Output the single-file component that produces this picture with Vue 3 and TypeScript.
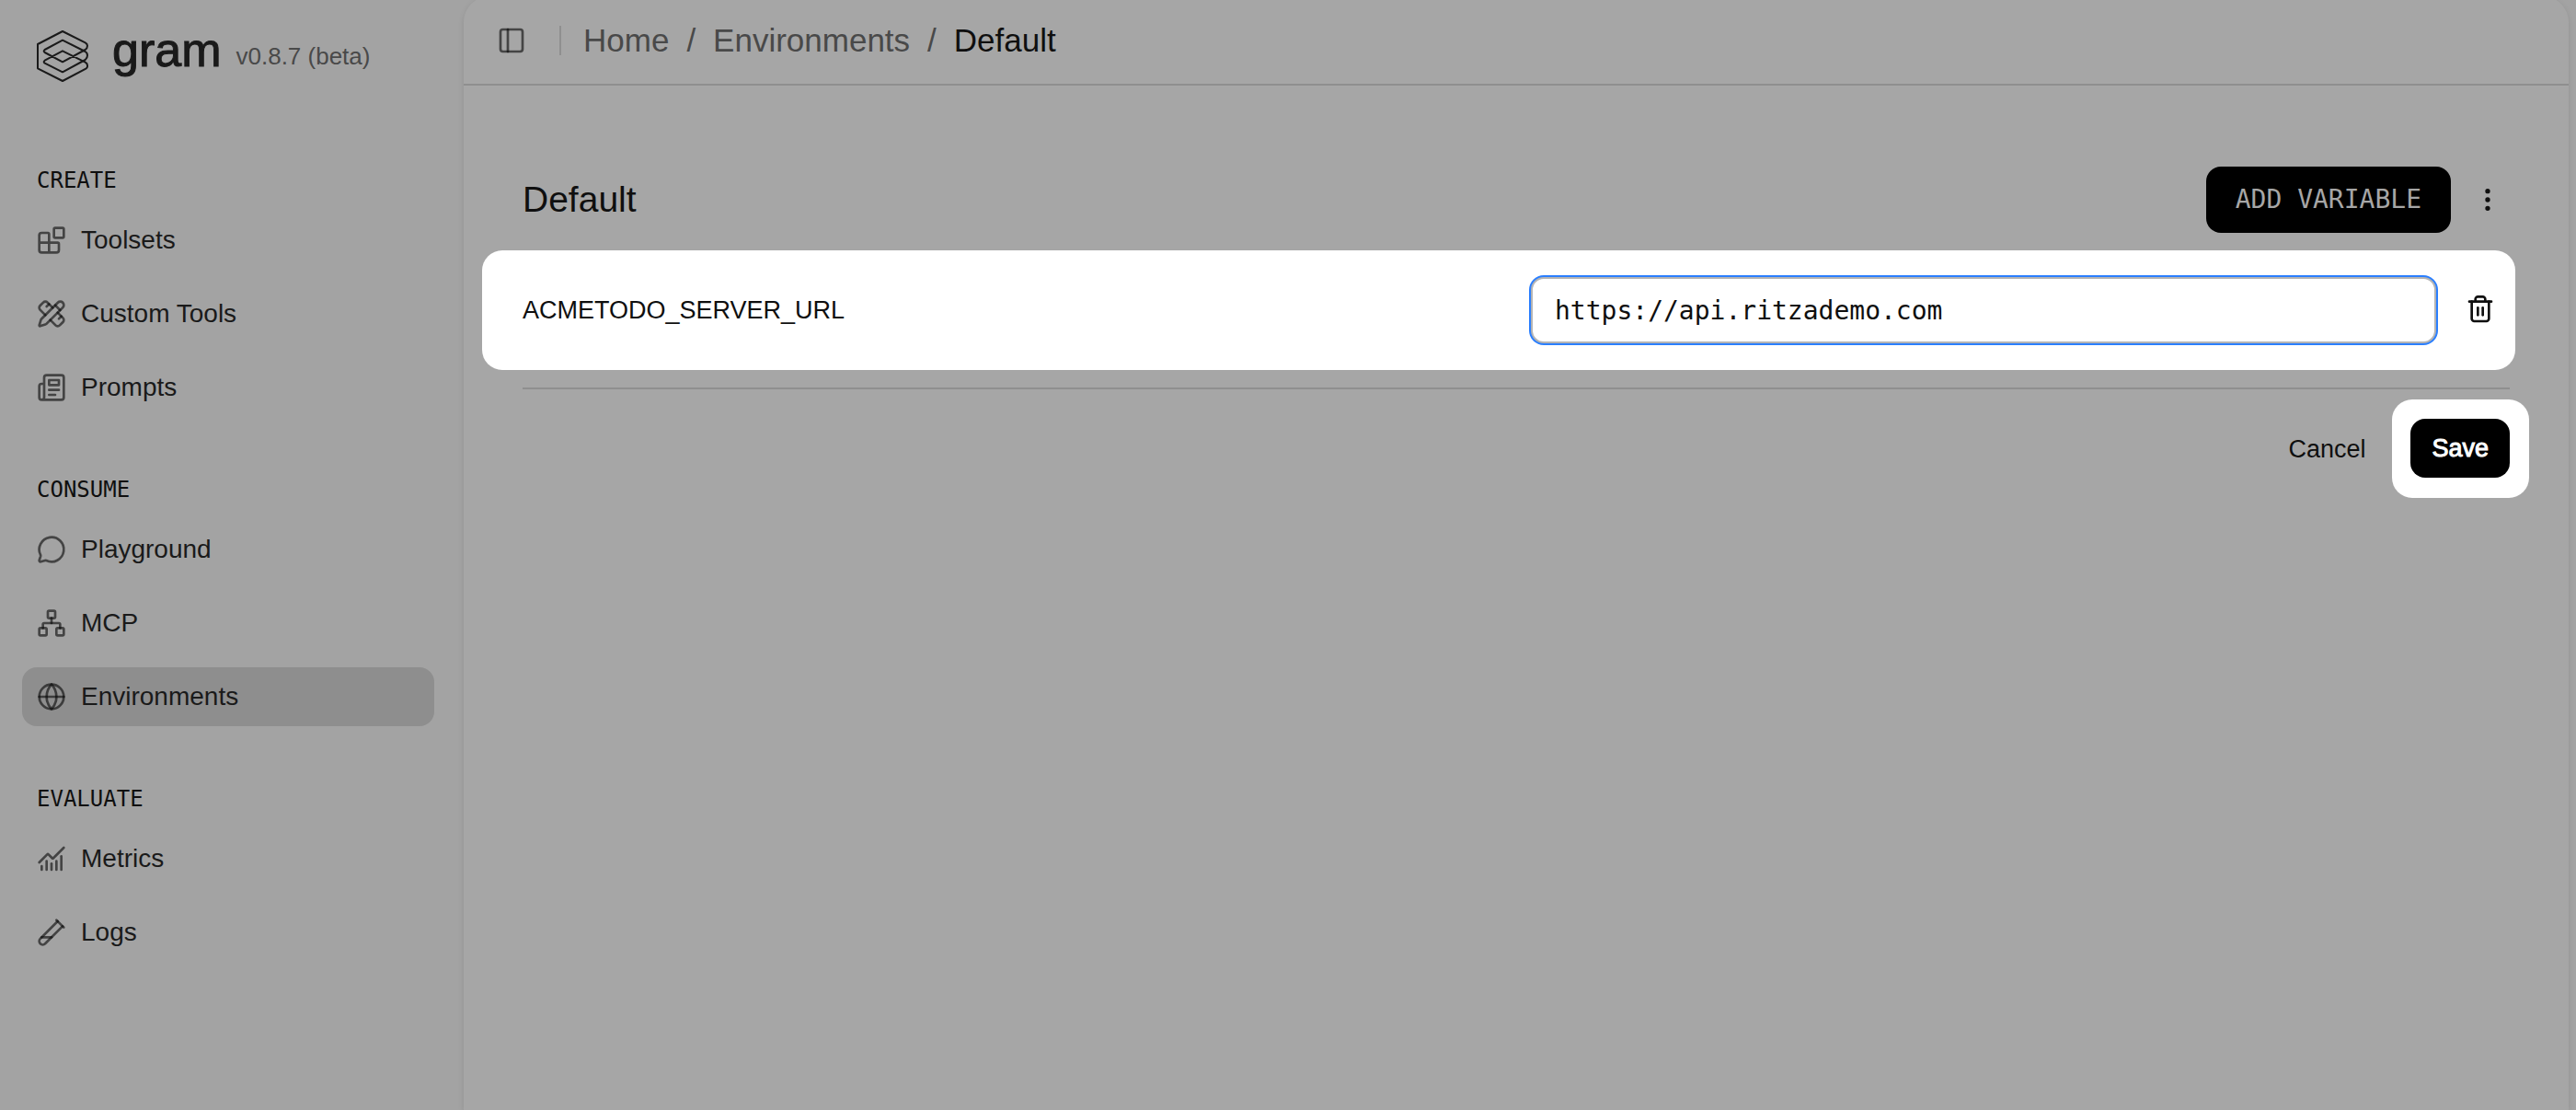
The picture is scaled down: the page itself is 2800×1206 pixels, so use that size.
<script setup lang="ts">
import { ref } from 'vue'

interface NavItem {
  label: string
  icon: string[]
  active?: boolean
}

interface NavGroup {
  title: string
  items: NavItem[]
}

const groups: NavGroup[] = [
  {
    title: 'CREATE',
    items: [
      {
        label: 'Toolsets',
        icon: [
          'M10 22V7a1 1 0 0 0-1-1H4a2 2 0 0 0-2 2v12a2 2 0 0 0 2 2h12a2 2 0 0 0 2-2v-5a1 1 0 0 0-1-1H2',
          'M15 2h6a1 1 0 0 1 1 1v6a1 1 0 0 1-1 1h-6a1 1 0 0 1-1-1V3a1 1 0 0 1 1-1z',
        ],
      },
      {
        label: 'Custom Tools',
        icon: [
          'M13 7 8.7 2.7a2.41 2.41 0 0 0-3.4 0L2.7 5.3a2.41 2.41 0 0 0 0 3.4L7 13',
          'm8 6 2-2',
          'm18 16 2-2',
          'm17 11 4.3 4.3c.94.94.94 2.46 0 3.4l-2.6 2.6c-.94.94-2.46.94-3.4 0L11 17',
          'M21.174 6.812a1 1 0 0 0-3.986-3.987L3.842 16.174a2 2 0 0 0-.5.83l-1.321 4.352a.5.5 0 0 0 .623.622l4.353-1.32a2 2 0 0 0 .83-.497z',
          'm15 5 4 4',
        ],
      },
      {
        label: 'Prompts',
        icon: [
          'M4 22h16a2 2 0 0 0 2-2V4a2 2 0 0 0-2-2H8a2 2 0 0 0-2 2v16a2 2 0 0 1-2 2Zm0 0a2 2 0 0 1-2-2v-9c0-1.1.9-2 2-2h2',
          'M18 14h-8',
          'M15 18h-5',
          'M10 6h8v4h-8V6Z',
        ],
      },
    ],
  },
  {
    title: 'CONSUME',
    items: [
      {
        label: 'Playground',
        icon: [
          'M2.992 16.342a2 2 0 0 1 .094 1.167l-1.065 3.29a1 1 0 0 0 1.236 1.168l3.413-.998a2 2 0 0 1 1.099.092 10 10 0 1 0-4.777-4.719',
        ],
      },
      {
        label: 'MCP',
        icon: [
          'M17 16h4a1 1 0 0 1 1 1v4a1 1 0 0 1-1 1h-4a1 1 0 0 1-1-1v-4a1 1 0 0 1 1-1z',
          'M3 16h4a1 1 0 0 1 1 1v4a1 1 0 0 1-1 1H3a1 1 0 0 1-1-1v-4a1 1 0 0 1 1-1z',
          'M10 2h4a1 1 0 0 1 1 1v4a1 1 0 0 1-1 1h-4a1 1 0 0 1-1-1V3a1 1 0 0 1 1-1z',
          'M5 16v-3a1 1 0 0 1 1-1h12a1 1 0 0 1 1 1v3',
          'M12 12V8',
        ],
      },
      {
        label: 'Environments',
        active: true,
        icon: [
          'M12 2a10 10 0 1 0 0 20 10 10 0 1 0 0-20z',
          'M12 2a14.5 14.5 0 0 0 0 20 14.5 14.5 0 0 0 0-20',
          'M2 12h20',
        ],
      },
    ],
  },
  {
    title: 'EVALUATE',
    items: [
      {
        label: 'Metrics',
        icon: [
          'M12 16v5',
          'M16 14v7',
          'M20 10v11',
          'm22 3-8.646 8.646a.5.5 0 0 1-.708 0L9.354 8.354a.5.5 0 0 0-.707 0L2 15',
          'M4 18v3',
          'M8 14v7',
        ],
      },
      {
        label: 'Logs',
        icon: [
          'M21 7 6.82 21.18a2.83 2.83 0 0 1-3.99-.01a2.83 2.83 0 0 1 0-4L17 3',
          'm16 2 6 6',
          'M12 16H4',
        ],
      },
    ],
  },
]

const serverUrl = ref('https://api.ritzademo.com')
</script>

<template>
  <div class="app">
    <aside class="sidebar">
      <div class="brand">
        <svg class="brand-mark" viewBox="0 0 168 168" aria-hidden="true">
          <path
            d="M84 3 158 40Q165 44 165 50Q165 58 158 63L84 103 26 72Q20 68 26 63L84 32 158 69Q165 73 165 82Q165 91 158 96L84 136 26 107Q20 103 26 98L84 67 158 104Q165 108 165 114V118Q165 122 160 125L84 165 3 124V45Z"
          />
        </svg>
        <span class="brand-name">gram</span>
        <span class="brand-version">v0.8.7 (beta)</span>
      </div>

      <nav class="nav">
        <section v-for="group in groups" :key="group.title" class="nav-group">
          <h2 class="nav-title">{{ group.title }}</h2>
          <ul class="nav-list">
            <li v-for="item in group.items" :key="item.label">
              <a href="#" class="nav-link" :class="{ active: item.active }">
                <svg class="icon soft" viewBox="0 0 24 24" aria-hidden="true">
                  <path v-for="d in item.icon" :key="d" :d="d" />
                </svg>
                <span>{{ item.label }}</span>
              </a>
            </li>
          </ul>
        </section>
      </nav>
    </aside>

    <main class="panel">
      <header class="topbar">
        <button type="button" class="plain" aria-label="Toggle sidebar">
          <svg class="icon soft" viewBox="0 0 24 24" aria-hidden="true">
            <path d="M5 3h14a2 2 0 0 1 2 2v14a2 2 0 0 1-2 2H5a2 2 0 0 1-2-2V5a2 2 0 0 1 2-2z" />
            <path d="M9 3v18" />
          </svg>
        </button>
        <span class="separator"></span>
        <nav class="crumbs" aria-label="Breadcrumb">
          <a href="#">Home</a>
          <span>/</span>
          <a href="#">Environments</a>
          <span>/</span>
          <a href="#" class="current" aria-current="page">Default</a>
        </nav>
      </header>

      <div class="content">
        <div class="title-row">
          <h1>Default</h1>
          <button type="button" class="add">ADD VARIABLE</button>
          <button type="button" class="plain menu" aria-label="More actions">
            <svg class="icon" viewBox="0 0 24 24" aria-hidden="true">
              <circle cx="12" cy="5" r="1" />
              <circle cx="12" cy="12" r="1" />
              <circle cx="12" cy="19" r="1" />
            </svg>
          </button>
        </div>

        <div class="variable">
          <label for="server-url">ACMETODO_SERVER_URL</label>
          <input id="server-url" v-model="serverUrl" type="text" spellcheck="false" />
          <button type="button" class="plain remove" aria-label="Delete variable">
            <svg class="icon" viewBox="0 0 24 24" aria-hidden="true">
              <path d="M3 5h18" />
              <path d="M19 5v14c0 1-1 2-2 2H7c-1 0-2-1-2-2V5" />
              <path d="M8 5V3c0-1 1-2 2-2h4c1 0 2 1 2 2v2" />
              <path d="M10 10v6" />
              <path d="M14 10v6" />
            </svg>
          </button>
        </div>

        <hr class="divider" />

        <div class="actions">
          <button type="button" class="plain cancel">Cancel</button>
          <div class="spotlight">
            <button type="button" class="save">Save</button>
          </div>
        </div>
      </div>
    </main>
  </div>
</template>

<style>
body {
  margin: 0;
  background: #a3a3a3;
}
</style>

<style scoped>
.app {
  display: flex;
  min-height: 100vh;
  overflow: hidden;
  box-sizing: border-box;
  padding-right: 8px;
  background: #a3a3a3;
  color: #0f0f0f;
  font-family: 'Liberation Sans', Arial, sans-serif;
  font-size: 27px;
  line-height: 32px;
}

button,
input {
  font: inherit;
  color: inherit;
}

button {
  border: 0;
  padding: 0;
  cursor: pointer;
}

a {
  color: inherit;
  text-decoration: none;
}

.plain {
  display: flex;
  align-items: center;
  justify-content: center;
  background: none;
}

.icon {
  display: block;
  flex: none;
  width: 32px;
  height: 32px;
  overflow: visible;
  fill: none;
  stroke: #0f0f0f;
  stroke-width: 2;
  stroke-linecap: round;
  stroke-linejoin: round;
}

.icon.soft {
  stroke: rgba(10, 10, 10, 0.62);
}

.sidebar {
  flex: none;
  width: 504px;
  color: #1a1a1a;
}

.brand {
  display: flex;
  align-items: center;
  height: 56px;
  padding: 33px 40px 0;
}

.brand-mark {
  width: 56px;
  height: 56px;
  fill: none;
  stroke: #1a1a1a;
  stroke-width: 6;
  stroke-linejoin: round;
}

.brand-name {
  margin-left: 26px;
  font-size: 52px;
  line-height: 56px;
  padding-bottom: 14px;
  -webkit-text-stroke: 1px #1a1a1a;
}

.brand-version {
  margin-left: 16px;
  font-size: 26px;
  color: #494949;
}

.nav {
  display: flex;
  flex-direction: column;
  gap: 46px;
  padding: 74px 32px 0 24px;
}

.nav-title {
  margin: 0;
  padding-left: 16px;
  font-family: 'DejaVu Sans Mono', monospace;
  font-size: 24px;
  font-weight: 400;
  line-height: 66px;
  color: #0f0f0f;
}

.nav-list {
  display: flex;
  flex-direction: column;
  gap: 16px;
  margin: 0;
  padding: 0;
  list-style: none;
}

.nav-link {
  display: flex;
  align-items: center;
  gap: 16px;
  height: 64px;
  padding: 0 16px;
  border-radius: 16px;
  font-size: 28px;
}

.nav-link.active {
  background: #8e8e8e;
}

.panel {
  flex: 1;
  min-width: 0;
  margin-top: -4px;
  border-radius: 28px 28px 0 0;
  background: #a6a6a6;
  box-shadow: 0 2px 6px rgba(0, 0, 0, 0.1);
}

.topbar {
  display: flex;
  align-items: center;
  height: 95px;
  padding: 0 36px;
  border-bottom: 2px solid #8f8f8f;
}

.separator {
  width: 2px;
  height: 32px;
  margin: 0 24px 0 36px;
  background: #8f8f8f;
}

.crumbs {
  display: flex;
  gap: 19px;
  font-size: 35px;
  line-height: 40px;
  color: #494949;
}

.crumbs .current {
  color: #0f0f0f;
}

.content {
  padding: 88px 64px 0;
}

.title-row {
  display: flex;
  align-items: center;
  height: 72px;
}

h1 {
  flex: 1;
  margin: 0;
  font-size: 39px;
  font-weight: 400;
  line-height: 48px;
}

.add {
  height: 72px;
  padding: 0 32px;
  border-radius: 16px;
  background: #000;
  color: #a6a6a6;
  font-family: 'DejaVu Sans Mono', monospace;
  font-size: 28px;
}

.menu {
  width: 48px;
  height: 48px;
  margin-left: 16px;
}

.variable {
  display: flex;
  align-items: center;
  gap: 16px;
  height: 130px;
  margin: 19px -6px 0 -44px;
  padding: 0 6px 0 44px;
  border-radius: 22px;
  background: #fff;
}

.variable label {
  flex: 0 0 50%;
}

.variable input {
  flex: 1;
  min-width: 0;
  height: 72px;
  box-sizing: border-box;
  padding: 0 24px;
  border: 2px solid #b4b4b4;
  border-radius: 14px;
  outline: 0;
  box-shadow: 0 0 0 2px #2b7fff;
  background: #fff;
  font-family: 'DejaVu Sans Mono', monospace;
  font-size: 28px;
}

.remove {
  width: 64px;
  height: 64px;
}

.divider {
  height: 2px;
  margin: 19px 0 11px;
  border: 0;
  background: #8f8f8f;
}

.actions {
  display: flex;
  align-items: center;
  justify-content: flex-end;
  margin-right: -21px;
}

.cancel {
  height: 64px;
  padding: 0 29px;
}

.spotlight {
  padding: 21px 21px 22px 20px;
  border-radius: 22px;
  background: #fff;
}

.save {
  display: block;
  height: 64px;
  padding: 0 23px;
  border-radius: 16px;
  background: #000;
  color: #fff;
  -webkit-text-stroke: 1px #fff;
}
</style>
